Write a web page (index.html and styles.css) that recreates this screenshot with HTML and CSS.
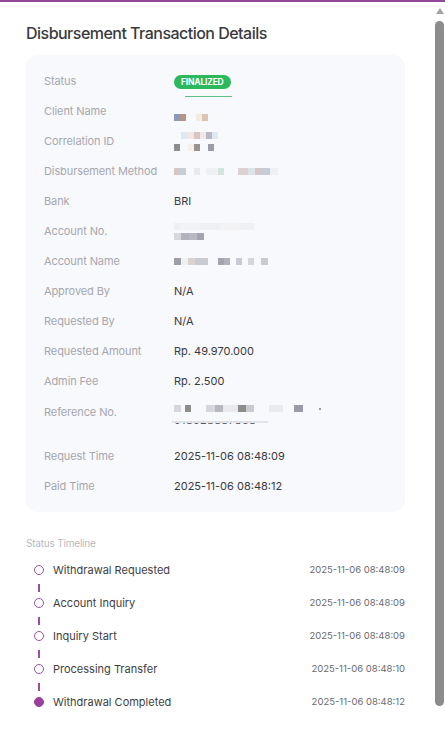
FILE: index.html
```html
<!DOCTYPE html>
<html>
<head>
<meta charset="utf-8">
<link rel="stylesheet" href="styles.css">
</head>
<body>
<div class="topbar"></div>
<div class="page">
  <h1 class="title">Disbursement Transaction Details</h1>
  <div class="card">
    <div class="row">
      <div class="label">Status</div>
      <div class="value"><span class="badge">FINALIZED</span></div>
    </div>
    <div class="row">
      <div class="label">Client Name</div>
      <div class="value low"><span class="mz"><i class="b w6 c-blue"></i><i class="b w6 c-brown"></i><i class="b w10"></i><i class="b w6 c-cream"></i><i class="b w6 c-tan"></i></span></div>
    </div>
    <div class="row">
      <div class="label">Correlation ID</div>
      <div class="value stack">
        <span class="mz"><i class="b w7"></i><i class="b w7 c-lblue"></i><i class="b w6 c-pink"></i><i class="b w6 c-rose"></i><i class="b w6 c-pink"></i><i class="b w6 c-m"></i><i class="b w6 c-lblue"></i></span>
        <span class="mz"><i class="b w6 c-d"></i><i class="b w8"></i><i class="b w6 c-cream2"></i><i class="b w6 c-d2"></i><i class="b w8"></i><i class="b w6 c-d3"></i></span>
      </div>
    </div>
    <div class="row">
      <div class="label">Disbursement Method</div>
      <div class="value"><span class="mz"><i class="b w6 c-rose"></i><i class="b w6 c-steel"></i><i class="b w8"></i><i class="b w6 c-f2"></i><i class="b w6"></i><i class="b w6 c-f"></i><i class="b w6 c-f"></i><i class="b w6 c-green"></i><i class="b w14"></i><i class="b w10 c-rose2"></i><i class="b w7 c-steel2"></i><i class="b w7 c-rose"></i><i class="b w8 c-steel"></i><i class="b w8 c-f"></i></span></div>
    </div>
    <div class="row">
      <div class="label">Bank</div>
      <div class="value">BRI</div>
    </div>
    <div class="row">
      <div class="label">Account No.</div>
      <div class="value stack">
        <span class="mz faint"><i class="b w6 c-f"></i><i class="b w20 c-f3"></i><i class="b w20 c-f"></i><i class="b w20 c-f3"></i><i class="b w14 c-f"></i></span>
        <span class="mz"><i class="b w7 c-l"></i><i class="b w8 c-m2"></i><i class="b w8 c-m"></i><i class="b w7 c-m3"></i></span>
      </div>
    </div>
    <div class="row">
      <div class="label">Account Name</div>
      <div class="value"><span class="mz"><i class="b w7 c-d4"></i><i class="b w7 c-f"></i><i class="b w7 c-pinkg"></i><i class="b w13 c-l2"></i><i class="b w10"></i><i class="b w6 c-m3"></i><i class="b w6 c-m2"></i><i class="b w6"></i><i class="b w6 c-l2"></i><i class="b w6"></i><i class="b w6 c-l"></i><i class="b w7"></i><i class="b w7 c-l2"></i></span></div>
    </div>
    <div class="row">
      <div class="label">Approved By</div>
      <div class="value">N/A</div>
    </div>
    <div class="row">
      <div class="label">Requested By</div>
      <div class="value">N/A</div>
    </div>
    <div class="row">
      <div class="label">Requested Amount</div>
      <div class="value">Rp. 49.970.000</div>
    </div>
    <div class="row">
      <div class="label">Admin Fee</div>
      <div class="value">Rp. 2.500</div>
    </div>
    <div class="row tall">
      <div class="label">Reference No.</div>
      <div class="value stack ref">
        <span class="mz"><i class="b w7 c-l"></i><i class="b w4"></i><i class="b w6 c-d"></i><i class="b w15"></i><i class="b w9 c-l"></i><i class="b w8 c-m"></i><i class="b w15 c-f2"></i><i class="b w8 c-d"></i><i class="b w8 c-l2"></i><i class="b w15"></i><i class="b w14 c-f2"></i><i class="b w11"></i><i class="b w9 c-d3"></i><i class="b w16"></i><i class="dot"></i></span>
        <span class="cut">918328887838</span>
      </div>
    </div>
    <div class="row">
      <div class="label">Request Time</div>
      <div class="value">2025-11-06 08:48:09</div>
    </div>
    <div class="row">
      <div class="label">Paid Time</div>
      <div class="value">2025-11-06 08:48:12</div>
    </div>
  </div>

  <div class="tl-title">Status Timeline</div>
  <ul class="timeline">
    <li class="tl-item"><span class="dot-o"></span><span class="tl-name">Withdrawal Requested</span><span class="tl-date">2025-11-06 08:48:09</span></li>
    <li class="tl-item"><span class="dot-o"></span><span class="tl-name">Account Inquiry</span><span class="tl-date">2025-11-06 08:48:09</span></li>
    <li class="tl-item"><span class="dot-o"></span><span class="tl-name">Inquiry Start</span><span class="tl-date">2025-11-06 08:48:09</span></li>
    <li class="tl-item"><span class="dot-o"></span><span class="tl-name">Processing Transfer</span><span class="tl-date">2025-11-06 08:48:10</span></li>
    <li class="tl-item"><span class="dot-o filled"></span><span class="tl-name">Withdrawal Completed</span><span class="tl-date">2025-11-06 08:48:12</span></li>
  </ul>
</div>

<div class="scrollbar">
  <span class="arrow"></span>
  <span class="thumb"></span>
</div>
</body>
</html>
```

FILE: styles.css
```css
* { box-sizing: border-box; }
html, body { margin: 0; padding: 0; }
body {
  font-family: Inter, "Noto Sans", sans-serif;
  background: #ffffff;
  color: #333;
  width: 445px;
  height: 731px;
  overflow: hidden;
  position: relative;
}
.topbar { height: 2px; background: #95479a; }
.page { padding: 20px 40px 0 26px; }
.title {
  margin: 0;
  font-size: 16px;
  line-height: 22px;
  font-weight: 500;
  color: #3a3a3e;
  letter-spacing: -0.52px;
}
.card {
  margin-top: 11px;
  background: #f8f9fc;
  border-radius: 12px;
  padding: 11px 18px 11px 18px;
}
.row {
  display: grid;
  grid-template-columns: 130px 1fr;
  align-items: center;
  height: 30px;
}
.row.tall { height: 45px; align-items: start; padding-top: 9px; }
.label { font-size: 11px; color: #a6a7ae; letter-spacing: -0.1px; }
.value { font-size: 11px; color: #3a3a3e; }
.value.low { padding-top: 12px; }
.value.stack { display: flex; flex-direction: column; gap: 5px; }
.badge {
  display: inline-block;
  position: relative;
  background: #2cb85c;
  color: #fff;
  font-weight: 700;
  font-size: 8.5px;
  line-height: 14px;
  height: 14px;
  padding: 0 7px;
  border-radius: 7px;
  letter-spacing: -0.2px;
}
.badge::after {
  content: "";
  position: absolute;
  left: 11px;
  right: -1px;
  top: 21px;
  height: 1px;
  background: #5cc08a;
}
.mz { display: flex; height: 7px; }
.b { display: block; height: 7px; }
.dot { display: block; width: 2px; height: 2px; background: #9a9aa4; margin-top: 3px; }
.w4 { width: 4px; } .w6 { width: 6px; } .w7 { width: 7px; } .w8 { width: 8px; }
.w9 { width: 9px; } .w10 { width: 10px; } .w11 { width: 11px; } .w13 { width: 13px; }
.w14 { width: 14px; } .w15 { width: 15px; } .w16 { width: 16px; } .w20 { width: 20px; }
.c-blue { background: #8a9ab8; }
.c-brown { background: #b49484; }
.c-cream { background: #f3ece0; }
.c-cream2 { background: #f5f1ea; }
.c-tan { background: #dac4b4; }
.c-lblue { background: #dfe8f2; }
.c-pink { background: #f1e8e6; }
.c-rose { background: #d6c6c6; }
.c-rose2 { background: #ddd1d6; }
.c-pinkg { background: #dcd2d2; }
.c-steel { background: #c5cdd9; }
.c-steel2 { background: #dde1e8; }
.c-green { background: #d2e5dd; }
.c-d { background: #8e8c8c; }
.c-d2 { background: #9a9290; }
.c-d3 { background: #9a9aa8; }
.c-d4 { background: #9e9ea6; }
.c-m { background: #b8b8c2; }
.c-m2 { background: #b2b2bc; }
.c-m3 { background: #a4a4b0; }
.c-l { background: #d6d6dc; }
.c-l2 { background: #cacad2; }
.c-f { background: #eff0f4; }
.c-f2 { background: #e9e9ee; }
.c-f3 { background: #f3f3f6; }
.mz.faint { height: 5px; }
.value.ref { gap: 2px; }
.cut {
  display: block;
  position: relative;
  font-size: 11px;
  line-height: 12px;
  color: #55555a;
  letter-spacing: 0.3px;
  align-self: flex-start;
}
.cut::after {
  content: "";
  position: absolute;
  left: -2px;
  right: -12px;
  top: 0;
  height: 7px;
  background: #f8f9fc;
  box-shadow: 0 2px 0 rgba(225, 226, 234, 0.9);
}
.tl-title {
  margin-top: 24px;
  font-size: 10px;
  line-height: 14px;
  color: #b8b9c0;
  letter-spacing: -0.2px;
}
.timeline { list-style: none; margin: 3px 0 0 0; padding: 0 0 0 8px; }
.tl-item {
  display: flex;
  align-items: center;
  height: 33px;
  position: relative;
}
.tl-item:not(:last-child)::after {
  content: "";
  position: absolute;
  left: 4px;
  top: 31px;
  width: 2px;
  height: 8px;
  background: #9a4fa0;
}
.dot-o {
  width: 10px;
  height: 10px;
  border: 1.3px solid #9a55a0;
  border-radius: 50%;
  flex: none;
}
.dot-o.filled { background: #9a3f9e; border-color: #9a3f9e; }
.tl-name { margin-left: 9px; font-size: 11px; color: #3e3e42; flex: 1; line-height: 14px; }
.tl-date { font-size: 9.5px; color: #6a6a70; line-height: 14px; }
.scrollbar {
  position: absolute;
  right: 0;
  top: 0;
  width: 13px;
  height: 731px;
}
.arrow {
  position: absolute;
  left: 4px;
  top: 8px;
  width: 0;
  height: 0;
  border-left: 4px solid transparent;
  border-right: 4px solid transparent;
  border-bottom: 6px solid #a3a3a3;
}
.thumb {
  position: absolute;
  left: 3px;
  top: 21px;
  width: 9px;
  height: 685px;
  background: #8c8c8c;
  border-radius: 5px;
}
```
